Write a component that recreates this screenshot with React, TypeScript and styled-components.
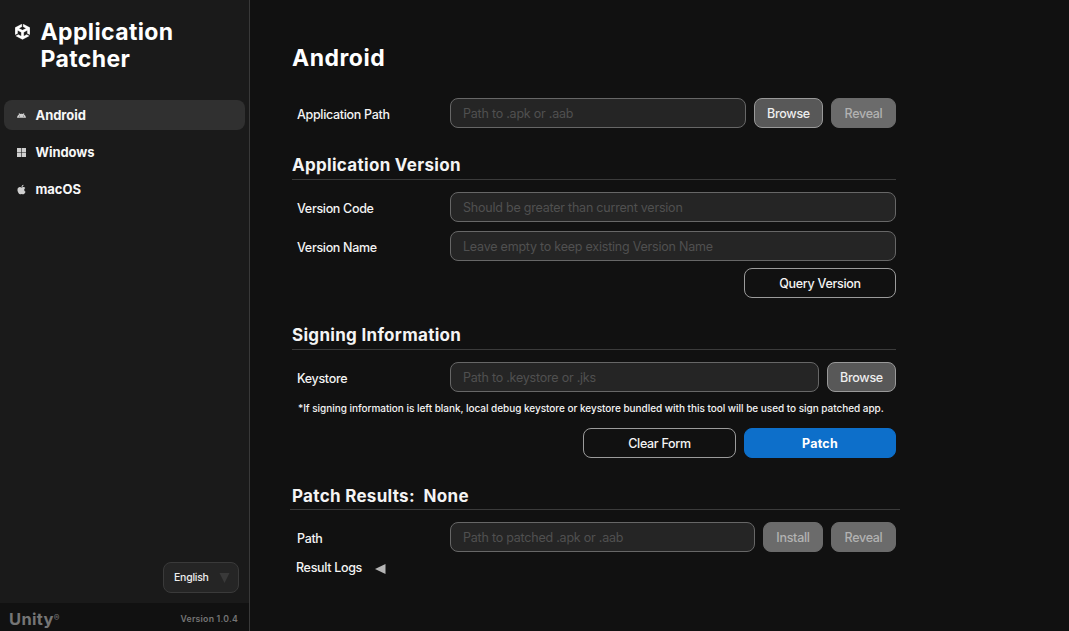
import React from "react";
import styled, { createGlobalStyle } from "styled-components";
import { FaApple } from "react-icons/fa";

const GlobalStyle = createGlobalStyle`
  *, *::before, *::after { box-sizing: border-box; }
  html, body { margin: 0; background: #111111; overflow: hidden; }
  body { font-family: Inter, sans-serif; color: #f4f4f4; }
  button, input { font-family: inherit; margin: 0; outline: none; }
`;

const Shell = styled.div`
  display: flex;
  width: 1069px;
  height: 631px;
`;

const Sidebar = styled.aside`
  width: 250px;
  flex: none;
  display: flex;
  flex-direction: column;
  background: #1a1a1a;
  border-right: 1px solid #393939;
`;

const Brand = styled.header`
  display: flex;
  gap: 10.5px;
  padding: 19px 0 0 15px;
  height: 100px;
  color: #ffffff;
  svg { margin-top: 5px; flex: none; }
`;

const AppTitle = styled.h1`
  margin: 0;
  width: 150px;
  font-size: 23px;
  line-height: 27px;
  font-weight: 700;
  letter-spacing: 0.38px;
`;

const Nav = styled.nav`
  display: flex;
  flex-direction: column;
  gap: 7px;
  padding: 0 4px;
  flex: 1;
`;

const NavItem = styled.a<{ $active?: boolean }>`
  display: flex;
  align-items: center;
  height: 30px;
  padding-left: 12px;
  gap: 8.5px;
  border-radius: 8px;
  background: ${(p) => (p.$active ? "#303030" : "transparent")};
  color: #f7f7f7;
  font-size: 13px;
  font-weight: 700;
  letter-spacing: -0.05px;
  svg { color: #cfcfcf; flex: none; }
`;

const LanguageSelect = styled.button`
  align-self: flex-end;
  display: flex;
  align-items: center;
  justify-content: space-between;
  width: 76px;
  height: 31px;
  margin: 0 10px 10px 0;
  padding: 0 8px 0 10px;
  border: 1px solid #3a3a3a;
  border-radius: 8px;
  background: #252525;
  color: #eeeeee;
  font-size: 10.5px;
  font-weight: 500;
  letter-spacing: -0.25px;
`;

const SidebarFooter = styled.footer`
  display: flex;
  align-items: center;
  justify-content: space-between;
  height: 28px;
  padding: 3px 11px 0 9px;
  background: #111111;
  color: #757575;
`;

const Wordmark = styled.span`
  display: flex;
  font-size: 16.5px;
  line-height: 18px;
  font-weight: 700;
  letter-spacing: 0.3px;
  sup { font-size: 8.5px; line-height: 16px; font-weight: 500; }
`;

const VersionText = styled.span`
  font-size: 8.7px;
  font-weight: 600;
  letter-spacing: 0.23px;
`;

const Main = styled.main`
  width: 646px;
  padding-left: 42px;
`;

const PageTitle = styled.h2`
  margin: 0;
  padding-top: 43px;
  height: 98px;
  font-size: 23px;
  line-height: 30px;
  font-weight: 700;
  letter-spacing: 0.5px;
  color: #ffffff;
`;

const Section = styled.section<{ $height: number }>`
  height: ${(p) => p.$height}px;
`;

const SectionTitle = styled.h3<{ $wide?: boolean }>`
  margin: ${(p) => (p.$wide ? "0 -4px 12px -2px" : "0 0 12px")};
  padding-left: ${(p) => (p.$wide ? 2 : 0)}px;
  padding-top: ${(p) => (p.$wide ? 1 : 0)}px;
  height: 26px;
  border-bottom: 1px solid #3b3b3b;
  font-size: 17px;
  line-height: 22px;
  font-weight: 700;
  letter-spacing: 0.3px;
  white-space: pre;
`;

const Field = styled.div<{ $after?: number }>`
  display: flex;
  gap: 8px;
  height: 30px;
  margin-bottom: ${(p) => p.$after ?? 0}px;
`;

const Label = styled.label`
  width: 150px;
  padding: 2px 0 0 5px;
  font-size: 12.5px;
  line-height: 30px;
  font-weight: 500;
  letter-spacing: -0.32px;
`;

const TextInput = styled.input`
  flex: 1;
  min-width: 0;
  padding: 0 12px;
  border: 1px solid #676767;
  border-radius: 8px;
  background: #252525;
  color: #eeeeee;
  font-size: 12.5px;
  letter-spacing: -0.22px;
  &::placeholder { color: #505050; opacity: 1; }
`;

const looks = {
  solid: "background:#585858;border-color:#999999;color:#eeeeee;",
  muted: "background:#6b6b6b;border-color:#6b6b6b;color:#b2b2b2;",
  outline: "background:transparent;border-color:#9b9b9b;color:#f4f4f4;",
  primary: "background:#0d6fca;border-color:#0d6fca;color:#ffffff;font-weight:700;letter-spacing:0.2px;",
};

const Button = styled.button<{ $look: keyof typeof looks; $width: number }>`
  width: ${(p) => p.$width}px;
  flex: none;
  height: 30px;
  padding: 0;
  border: 1px solid;
  border-radius: 8px;
  font-size: 12.5px;
  font-weight: 500;
  letter-spacing: -0.3px;
  ${(p) => looks[p.$look]}
`;

const Actions = styled.div`
  display: flex;
  justify-content: flex-end;
  gap: 8px;
`;

const Note = styled.p`
  margin: 0;
  padding: 8px 0 0 6px;
  height: 36px;
  font-size: 10px;
  line-height: 16px;
  font-weight: 500;
  letter-spacing: -0.032px;
  white-space: nowrap;
`;

const LogsToggle = styled.div`
  display: flex;
  align-items: center;
  gap: 12.5px;
  padding-left: 4px;
  height: 31px;
  font-size: 12.5px;
  font-weight: 500;
  letter-spacing: -0.32px;
  svg { margin-top: 2px; }
`;

const UnityIcon = () => (
  <svg width="15" height="15.5" viewBox="1.2 0 21.6 24" preserveAspectRatio="none">
    <path
      fill="currentColor"
      stroke="currentColor"
      strokeWidth="0.3"
      d="m12.9288 4.2939 3.7997 2.1929c.1366.077.1415.2905 0 .3675l-4.515 2.6076a.4192.4192 0 0 1-.4246 0L7.274 6.8543c-.139-.0745-.1415-.293 0-.3675l3.7972-2.193V0L1.3758 5.5977V16.793l3.7177-2.1456v-4.3858c-.0025-.1565.1813-.2682.318-.1838l4.5148 2.6076a.4252.4252 0 0 1 .2136.3676v5.2127c.0025.1565-.1813.2682-.3179.1838l-3.7996-2.1929-3.7178 2.1457L12 24l9.6954-5.5977-3.7178-2.1457-3.7996 2.1929c-.1341.082-.3229-.0248-.3179-.1838V13.053c0-.1565.087-.2956.2136-.3676l4.5149-2.6076c.134-.082.3228.0224.3179.1838v4.3858l3.7177 2.1456V5.5977L12.9288 0Z"
    />
  </svg>
);

const AndroidIcon = () => (
  <svg width="11" height="11" viewBox="0 0 11 11">
    <path fill="currentColor" fillRule="evenodd" d="M1 7.8C1.1 6.3 2 5 3.1 4.3L2.7 3.2L3.2 3L3.9 3.9Q5.5 3.4 7.1 3.9L7.8 3L8.3 3.2L7.9 4.3C9 5 9.9 6.3 10 7.8ZM3.1 5.7h0.7v0.7H3.1ZM7.2 5.7h0.7v0.7H7.2Z" />
  </svg>
);

const WindowsIcon = () => (
  <svg width="11" height="11" viewBox="0 0 11 11">
    <path fill="currentColor" d="M1 1h4.2v4.2H1ZM5.8 1H10v4.2H5.8ZM1 5.8h4.2V10H1ZM5.8 5.8H10V10H5.8Z" />
  </svg>
);

export default function App() {
  return (
    <>
      <GlobalStyle />
      <Shell>
        <Sidebar>
          <Brand>
            <UnityIcon />
            <AppTitle>Application Patcher</AppTitle>
          </Brand>
          <Nav>
            <NavItem $active><AndroidIcon />Android</NavItem>
            <NavItem><WindowsIcon />Windows</NavItem>
            <NavItem><FaApple size={11} />macOS</NavItem>
          </Nav>
          <LanguageSelect>
            English
            <svg width="11" height="10" viewBox="0 0 11 10"><path fill="#393939" d="M0.5 0h10L5.5 10Z" /></svg>
          </LanguageSelect>
          <SidebarFooter>
            <Wordmark>Unity<sup>®</sup></Wordmark>
            <VersionText>Version 1.0.4</VersionText>
          </SidebarFooter>
        </Sidebar>
        <Main>
          <PageTitle>Android</PageTitle>
          <Section $height={56}>
            <Field>
              <Label>Application Path</Label>
              <TextInput placeholder="Path to .apk or .aab" />
              <Button $look="solid" $width={69}>Browse</Button>
              <Button $look="muted" $width={65}>Reveal</Button>
            </Field>
          </Section>
          <Section $height={170}>
            <SectionTitle>Application Version</SectionTitle>
            <Field $after={9}>
              <Label>Version Code</Label>
              <TextInput placeholder="Should be greater than current version" />
            </Field>
            <Field $after={7}>
              <Label>Version Name</Label>
              <TextInput placeholder="Leave empty to keep existing Version Name" />
            </Field>
            <Actions>
              <Button $look="outline" $width={152}>Query Version</Button>
            </Actions>
          </Section>
          <Section $height={160}>
            <SectionTitle>Signing Information</SectionTitle>
            <Field>
              <Label>Keystore</Label>
              <TextInput placeholder="Path to .keystore or .jks" />
              <Button $look="solid" $width={69}>Browse</Button>
            </Field>
            <Note>*If signing information is left blank, local debug keystore or keystore bundled with this tool will be used to sign patched app.</Note>
            <Actions>
              <Button $look="outline" $width={153}>Clear Form</Button>
              <Button $look="primary" $width={152}>Patch</Button>
            </Actions>
          </Section>
          <Section $height={100}>
            <SectionTitle $wide>Patch Results:  None</SectionTitle>
            <Field>
              <Label>Path</Label>
              <TextInput placeholder="Path to patched .apk or .aab" />
              <Button $look="muted" $width={60}>Install</Button>
              <Button $look="muted" $width={65}>Reveal</Button>
            </Field>
            <LogsToggle>
              Result Logs
              <svg width="11" height="10" viewBox="0 0 11 10"><path fill="#b5b5b5" d="M10.5 0v10L0 5Z" /></svg>
            </LogsToggle>
          </Section>
        </Main>
      </Shell>
    </>
  );
}
